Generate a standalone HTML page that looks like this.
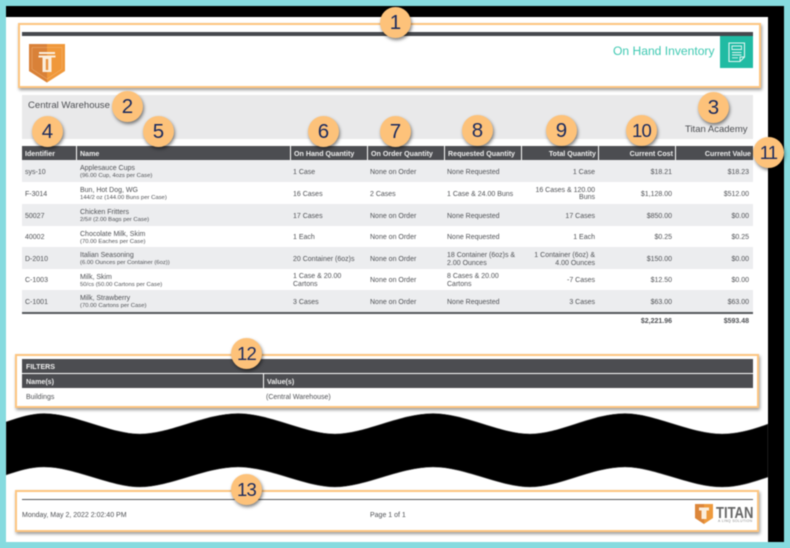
<!DOCTYPE html>
<html><head><meta charset="utf-8"><style>
html,body{margin:0;padding:0}
body{width:790px;height:548px;overflow:hidden;background:#86dbdf;position:relative;font-family:"Liberation Sans",sans-serif;color:#505256}
.a{position:absolute}
#doc{position:absolute;left:0;top:0;width:790px;height:548px;filter:blur(.42px)}
.box{position:absolute;border:2px solid #fdc580;box-shadow:1px 2px 3px rgba(0,0,0,.4);box-sizing:border-box}
.h{position:absolute;top:146px;height:14px;background:#4c4d51;color:#eee;font-weight:bold;font-size:7.1px;line-height:16.5px;box-sizing:border-box;padding:0 2px 0 3px;white-space:nowrap;overflow:hidden}
.r{position:absolute;left:22px;width:731px}
.g{background:#ecedef}
.c{position:absolute;top:0;margin-top:1.5px;height:100%;display:flex;flex-direction:column;justify-content:center;font-size:7px;line-height:7.8px;box-sizing:border-box}
.c small{font-size:5.9px;line-height:6.4px;display:block;color:#505256;margin-top:.6px}
.c1{left:3px;width:50px}.c2{left:58px;width:210px}.c3{left:271px;width:74px}.c4{left:348px;width:74px}.c5{left:425px;width:72px}
.c6{left:499px;width:74px;text-align:right}.c7{left:576px;width:74px;text-align:right}.c8{left:654px;width:73px;text-align:right}
.n{position:absolute;width:31px;height:31px;border-radius:50%;background:#fdc27a;box-shadow:1px 2px 3px rgba(0,0,0,.5);color:#1a2a5e;font-size:20.5px;line-height:31px;text-align:center}
.n.t{font-size:18.5px;letter-spacing:-.8px}
</style></head><body>
<div id="doc">
<div class="a" style="left:6px;top:6px;width:778px;height:536px;background:#000"></div>
<div class="a" style="left:6px;top:17px;width:762px;height:525px;background:#fff"></div>

<div class="box" style="left:18px;top:23px;width:743px;height:64.500px"></div>
<div class="a" style="left:22px;top:32px;width:731px;height:4px;background:#45484d"></div>
<svg class="a" style="left:29px;top:44px" width="36" height="39" viewBox="0 0 36 39">
<path d="M0 0H36V27L18 38.500L0 27Z" fill="#f0983a"/>
<path d="M0 0H18V38.500L0 27Z" fill="#d98138"/>
<path d="M3 3.500H33V25L18 35L3 25Z" fill="none" stroke="#f5c08a" stroke-width=".5" opacity=".8"/>
<path d="M10 8H26V10H10ZM9.500 11.500H26.500V13.500H9.500Z" fill="#fbeedd"/>
<path d="M13.500 13H22.500V28H13.500Z" fill="#fbeedd"/>
<path d="M16.800 15H19.200V26H16.800Z" fill="#ea9440"/>
</svg>
<div class="a" style="left:613px;top:43px;font-size:12.100px;line-height:16px;color:#3fc9b2;white-space:nowrap">On Hand Inventory</div>
<div class="a" style="left:720px;top:36px;width:33px;height:32px;background:#20bba3"></div>
<svg class="a" style="left:720px;top:36px" width="33" height="32" viewBox="0 0 33 32" fill="none" stroke="#e6f7f3" stroke-width="1.100">
<path d="M9 7H24.500V21L20 25.500H9Z"/>
<path d="M12 10H21.500V13.500H12ZM12 16.500H21.500M12 19H21.500M12 21.800H18M20 25.500V21H24.500" stroke-width=".9"/>
</svg>

<div class="a" style="left:22px;top:95px;width:731px;height:44px;background:#e9e9ea"></div>
<div class="a" style="left:28px;top:100px;font-size:9.550px;line-height:12px;color:#4d4f53;white-space:nowrap">Central Warehouse</div>
<div class="a" style="left:685px;top:124px;font-size:9.500px;line-height:12px;color:#4d4f53;white-space:nowrap">Titan Academy</div>

<div class="h" style="left:22px;width:54px">Identifier</div>
<div class="h" style="left:77px;width:213px">Name</div>
<div class="h" style="left:291px;width:76px">On Hand Quantity</div>
<div class="h" style="left:368px;width:76px">On Order Quantity</div>
<div class="h" style="left:445px;width:76px">Requested Quantity</div>
<div class="h" style="left:522px;width:76px;text-align:right">Total Quantity</div>
<div class="h" style="left:599px;width:76px;text-align:right">Current Cost</div>
<div class="h" style="left:676px;width:77px;text-align:right">Current Value</div>

<div class="r g" style="top:160px;height:22px"><div class="c c1">sys-10</div><div class="c c2">Applesauce Cups<small>(96.00 Cup, 4ozs per Case)</small></div><div class="c c3">1 Case</div><div class="c c4">None on Order</div><div class="c c5">None Requested</div><div class="c c6">1 Case</div><div class="c c7">$18.21</div><div class="c c8">$18.23</div></div>
<div class="r" style="top:182px;height:22px"><div class="c c1">F-3014</div><div class="c c2">Bun, Hot Dog, WG<small>144/2 oz (144.00 Buns per Case)</small></div><div class="c c3">16 Cases</div><div class="c c4">2 Cases</div><div class="c c5">1 Case &amp; 24.00 Buns</div><div class="c c6" style="line-height:6.700px">16 Cases &amp; 120.00 Buns</div><div class="c c7">$1,128.00</div><div class="c c8">$512.00</div></div>
<div class="r g" style="top:204px;height:22px"><div class="c c1">50027</div><div class="c c2">Chicken Fritters<small>2/5# (2.00 Bags per Case)</small></div><div class="c c3">17 Cases</div><div class="c c4">None on Order</div><div class="c c5">None Requested</div><div class="c c6">17 Cases</div><div class="c c7">$850.00</div><div class="c c8">$0.00</div></div>
<div class="r" style="top:226px;height:21px"><div class="c c1">40002</div><div class="c c2">Chocolate Milk, Skim<small>(70.00 Eaches per Case)</small></div><div class="c c3">1 Each</div><div class="c c4">None on Order</div><div class="c c5">None Requested</div><div class="c c6">1 Each</div><div class="c c7">$0.25</div><div class="c c8">$0.25</div></div>
<div class="r g" style="top:247px;height:22px"><div class="c c1">D-2010</div><div class="c c2">Italian Seasoning<small>(6.00 Ounces per Container (6oz))</small></div><div class="c c3">20 Container (6oz)s</div><div class="c c4">None on Order</div><div class="c c5">18 Container (6oz)s &amp; 2.00 Ounces</div><div class="c c6">1 Container (6oz) &amp; 4.00 Ounces</div><div class="c c7">$150.00</div><div class="c c8">$0.00</div></div>
<div class="r" style="top:269px;height:21px"><div class="c c1">C-1003</div><div class="c c2">Milk, Skim<small>50/cs (50.00 Cartons per Case)</small></div><div class="c c3">1 Case &amp; 20.00 Cartons</div><div class="c c4">None on Order</div><div class="c c5">8 Cases &amp; 20.00 Cartons</div><div class="c c6">-7 Cases</div><div class="c c7">$12.50</div><div class="c c8">$0.00</div></div>
<div class="r g" style="top:290px;height:22px"><div class="c c1">C-1001</div><div class="c c2">Milk, Strawberry<small>(70.00 Cartons per Case)</small></div><div class="c c3">3 Cases</div><div class="c c4">None on Order</div><div class="c c5">None Requested</div><div class="c c6">3 Cases</div><div class="c c7">$63.00</div><div class="c c8">$63.00</div></div>
<div class="a" style="left:22px;top:312px;width:731px;height:2px;background:#55585c"></div>
<div class="a" style="left:598px;top:317px;width:74px;text-align:right;font-size:7px;line-height:9px;font-weight:bold">$2,221.96</div>
<div class="a" style="left:676px;top:317px;width:73px;text-align:right;font-size:7px;line-height:9px;font-weight:bold">$593.48</div>

<div class="box" style="left:15px;top:353.500px;width:744px;height:54.500px"></div>
<div class="a" style="left:22px;top:359px;width:731px;height:14px;background:#4c4d51;color:#eee;font-weight:bold;font-size:7.100px;line-height:16px;padding-left:4px;box-sizing:border-box">FILTERS</div>
<div class="a" style="left:22px;top:374px;width:241px;height:14px;background:#4c4d51;color:#eee;font-weight:bold;font-size:7.100px;line-height:16px;padding-left:4px;box-sizing:border-box">Name(s)</div>
<div class="a" style="left:264px;top:374px;width:489px;height:14px;background:#4c4d51;color:#eee;font-weight:bold;font-size:7.100px;line-height:16px;padding-left:3px;box-sizing:border-box">Value(s)</div>
<div class="a" style="left:26px;top:393px;font-size:7px;line-height:9px">Buildings</div>
<div class="a" style="left:266px;top:393px;font-size:7px;line-height:9px">(Central Warehouse)</div>

<svg class="a" style="left:6px;top:405px" width="762" height="90" viewBox="6 405 762 90">
<path d="M6 422C20 417 32 413.500 44 413.500C75 413.500 110 434 140 434C170 434 205 413.500 238 413.500C270 413.500 305 434 335 434C365 434 400 413.500 433 413.500C465 413.500 500 434 530 434C560 434 592 413.500 625 413.500C655 413.500 690 434 722 434C738 434 755 429 768 424V477C750 483 738 487 722 487C690 487 655 467 625 467C592 467 560 487 530 487C500 487 465 467 433 467C400 467 365 487 335 487C305 487 270 467 238 467C205 467 170 487 140 487C110 487 75 467 44 467C30 467 18 471 6 475Z" fill="#000" stroke="#555" stroke-width=".6"/>
</svg>

<div class="box" style="left:15px;top:489.500px;width:744px;height:42px"></div>
<div class="a" style="left:22px;top:498.500px;width:731px;height:1.500px;background:#55585c"></div>
<div class="a" style="left:22px;top:511px;font-size:7px;line-height:9px;white-space:nowrap">Monday, May 2, 2022 2:02:40 PM</div>
<div class="a" style="left:370px;top:511px;font-size:7px;line-height:9px;white-space:nowrap">Page 1 of 1</div>
<svg class="a" style="left:695px;top:503.500px" width="18" height="20" viewBox="0 0 18 20">
<path d="M0 0H18V14L9 20L0 14Z" fill="#ee9a3d"/>
<path d="M0 0H9V20L0 14Z" fill="#dc863a"/>
<path d="M4 3.500H14V6.500H11.500V15H6.500V6.500H4Z" fill="#fbeedd"/>
</svg>
<div class="a" style="left:716px;top:505.500px;font-size:15.500px;line-height:15px;font-weight:bold;color:#666;white-space:nowrap;transform:scaleX(.84);transform-origin:0 0">TITAN</div>
<div class="a" style="left:718px;top:518.500px;font-size:3.400px;line-height:4px;color:#888;letter-spacing:.35px;white-space:nowrap">A LINQ SOLUTION</div>

<div class="n" style="left:380px;top:7px">1</div>
<div class="n" style="left:112px;top:91px">2</div>
<div class="n" style="left:698px;top:92px">3</div>
<div class="n" style="left:32px;top:116px">4</div>
<div class="n" style="left:143px;top:116px">5</div>
<div class="n" style="left:308px;top:116px">6</div>
<div class="n" style="left:380px;top:116px">7</div>
<div class="n" style="left:462px;top:115px">8</div>
<div class="n" style="left:546px;top:115px">9</div>
<div class="n t" style="left:626px;top:115px">10</div>
<div class="n t" style="left:753px;top:137px">11</div>
<div class="n t" style="left:231px;top:338px">12</div>
<div class="n t" style="left:231px;top:474px">13</div>
</div>
</body></html>
